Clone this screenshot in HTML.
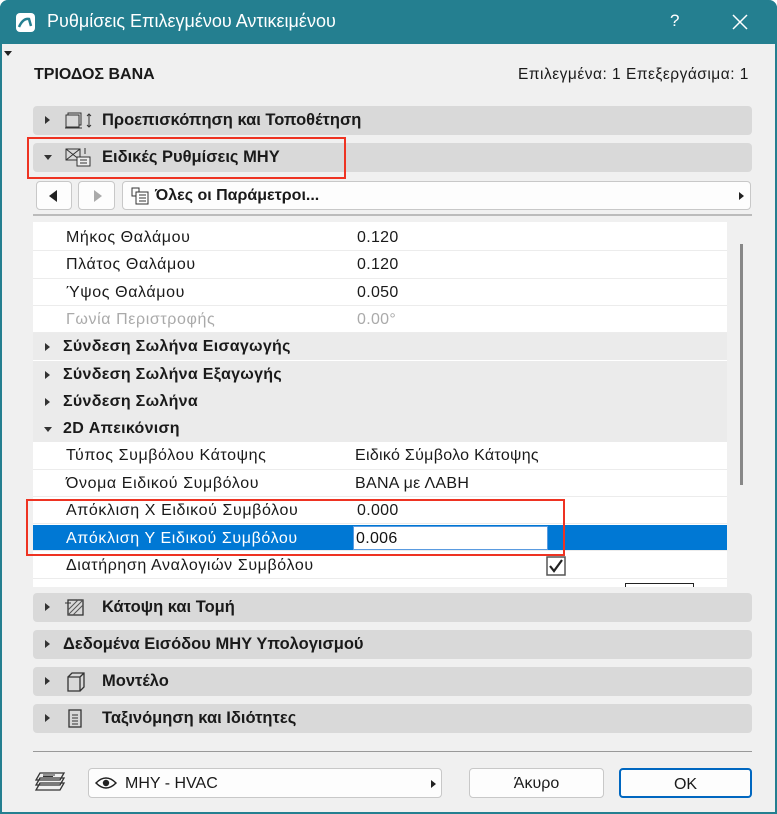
<!DOCTYPE html>
<html><head><meta charset="utf-8"><style>
*{box-sizing:border-box;margin:0;padding:0}
body{width:777px;height:814px;overflow:hidden;background:#fff;font-family:"Liberation Sans","DejaVu Sans",sans-serif;position:relative;font-size:14px;color:#1a1a1a}
.win{position:absolute;left:0;top:0;width:777px;height:814px;background:#f0f0f0;border:2px solid #247f90;border-top:none;border-radius:8px 8px 0 0}
.title{position:absolute;left:0;top:0;width:777px;height:44px;background:#247f90;border-radius:8px 8px 0 0;color:#fff}
.abs{position:absolute}
.hdr{position:absolute;left:33px;width:719px;height:29px;background:#d9d9d9;border-radius:4px;font-weight:bold;font-size:16.5px}
.hdr .t{position:absolute;top:5px}
.tri{position:absolute;width:0;height:0}
.tr{border-top:4px solid transparent;border-bottom:4px solid transparent;border-left:5px solid #333}
.td{border-left:4px solid transparent;border-right:4px solid transparent;border-top:5px solid #333}
.row{position:absolute;left:33px;width:694px;height:27.3px;border-bottom:1px solid #ececec;font-size:16px;letter-spacing:0.6px}
.row .a{position:absolute;left:33px;top:5px}
.row .b{position:absolute;left:324px;top:5px;letter-spacing:0.3px}
.grp{background:#ebebeb;font-weight:bold;border-bottom:none;font-size:16px;letter-spacing:0.3px}
.grp .a{left:30px}
.grp .tri{left:12px;top:10px}
.red{position:absolute;border:2px solid #ee3322}
.btn{position:absolute;background:#fdfdfd;border:1px solid #c8c8c8;border-radius:4px}
</style></head><body>
<div class="win"></div>
<div class="title">
 <div class="abs" style="left:16px;top:13px;width:19px;height:19px;background:#fff;border-radius:4px"><svg width="19" height="19"><path d="M3 14 Q7 5 13 6 L15 13" stroke="#247f90" stroke-width="2.5" fill="none"/></svg></div>
 <div class="abs" style="left:47px;top:11px;font-size:18px">Ρυθμίσεις Επιλεγμένου Αντικειμένου</div>
 <div class="abs" style="left:670px;top:11px;font-size:17px">?</div>
 <svg class="abs" style="left:732px;top:14px" width="16" height="16"><path d="M1 1L15 15M15 1L1 15" stroke="#fff" stroke-width="1.5"/></svg>
</div>
<div class="tri td" style="left:4px;top:51px;border-top-color:#222"></div>
<div class="abs" style="left:34px;top:66px;font-weight:bold;font-size:16px">ΤΡΙΟΔΟΣ ΒΑΝΑ</div>
<div class="abs" style="left:518px;top:66px;font-size:15.5px;letter-spacing:0.5px">Επιλεγμένα: 1 Επεξεργάσιμα: 1</div>

<div class="hdr" style="top:106px"><div class="tri tr" style="left:12px;top:10px"></div>
<svg class="abs" style="left:32px;top:5px" width="30" height="20"><rect x="3" y="2" width="13" height="12" fill="none" stroke="#333"/><rect x="1" y="4" width="13" height="12" fill="#d9d9d9" stroke="#333"/><path d="M0 17h17" stroke="#333"/><path d="M24 3v13M22 5l2-2 2 2M22 14l2 2 2-2" stroke="#333" fill="none"/></svg>
<div class="t" style="left:69px">Προεπισκόπηση και Τοποθέτηση</div></div>
<div class="hdr" style="top:143px"><div class="tri td" style="left:11px;top:12px"></div>
<svg class="abs" style="left:32px;top:4px" width="30" height="22"><rect x="1" y="2" width="14" height="11" fill="none" stroke="#333"/><path d="M1 2l14 11M15 2L1 13" stroke="#333"/><rect x="12" y="10" width="13" height="9" fill="#eee" stroke="#333"/><path d="M15 13h7M15 16h7M20 1v6" stroke="#333"/></svg>
<div class="t" style="left:69px">Ειδικές Ρυθμίσεις ΜΗΥ</div></div>
<div class="red" style="left:27px;top:137px;width:319px;height:42px"></div>

<div class="btn" style="left:36px;top:181px;width:36px;height:29px"><div class="tri" style="left:12px;top:8px;border-top:6px solid transparent;border-bottom:6px solid transparent;border-right:8px solid #222"></div></div>
<div class="btn" style="left:78px;top:181px;width:37px;height:29px"><div class="tri" style="left:15px;top:8px;border-top:6px solid transparent;border-bottom:6px solid transparent;border-left:8px solid #aaa"></div></div>
<div class="btn" style="left:122px;top:181px;width:629px;height:29px">
<svg class="abs" style="left:8px;top:5px" width="20" height="18"><rect x="1" y="1" width="7" height="8" fill="none" stroke="#333"/><rect x="5" y="5" width="12" height="12" fill="#fff" stroke="#333"/><path d="M8 8h7M8 11h7M8 14h7" stroke="#333"/></svg>
<div class="abs" style="left:32px;top:5px;font-weight:bold;font-size:16px">Όλες οι Παράμετροι...</div>
<div class="tri tr" style="left:616px;top:10px;border-left-color:#222"></div></div>
<div class="abs" style="left:33px;top:214px;width:719px;height:2px;background:#bbb"></div>

<div class="abs" style="left:33px;top:222px;width:694px;height:365px;background:#fff"></div>
<div class="abs" style="left:740px;top:244px;width:3px;height:241px;background:#888"></div>
<div class="row" style="top:224px"><span class="a">Μήκος Θαλάμου</span><span class="b">0.120</span></div>
<div class="row" style="top:251.3px"><span class="a">Πλάτος Θαλάμου</span><span class="b">0.120</span></div>
<div class="row" style="top:278.6px"><span class="a">Ύψος Θαλάμου</span><span class="b">0.050</span></div>
<div class="row" style="top:305.9px;color:#aaa"><span class="a">Γωνία Περιστροφής</span><span class="b">0.00°</span></div>
<div class="row grp" style="top:333.2px"><div class="tri tr"></div><span class="a">Σύνδεση Σωλήνα Εισαγωγής</span></div>
<div class="row grp" style="top:360.5px"><div class="tri tr"></div><span class="a">Σύνδεση Σωλήνα Εξαγωγής</span></div>
<div class="row grp" style="top:387.8px"><div class="tri tr"></div><span class="a">Σύνδεση Σωλήνα</span></div>
<div class="row grp" style="top:415.1px"><div class="tri td" style="top:12px;left:11px"></div><span class="a">2D Απεικόνιση</span></div>
<div class="row" style="top:442.4px"><span class="a">Τύπος Συμβόλου Κάτοψης</span><span class="b" style="left:322px">Ειδικό Σύμβολο Κάτοψης</span></div>
<div class="row" style="top:469.7px"><span class="a">Όνομα Ειδικού Συμβόλου</span><span class="b" style="left:322px">ΒΑΝΑ με ΛΑΒΗ</span></div>
<div class="row" style="top:497px"><span class="a">Απόκλιση Χ Ειδικού Συμβόλου</span><span class="b">0.000</span></div>
<div class="row" style="top:525px;background:#0078d4;color:#fff;height:26px"><span class="a">Απόκλιση Υ Ειδικού Συμβόλου</span>
<div class="abs" style="left:320px;top:1px;width:195px;height:24px;background:#fff;border:1px solid #5a9be0;color:#111;padding:3px 0 0 2px;letter-spacing:0.3px">0.006</div></div>
<div class="row" style="top:551.6px"><span class="a">Διατήρηση Αναλογιών Συμβόλου</span>
<svg class="abs" style="left:513px;top:4px" width="20" height="20"><rect x="1" y="1" width="18" height="18" fill="#fff" stroke="#555" stroke-width="1.5"/><path d="M4 10l4 5 8-11" stroke="#222" stroke-width="2.2" fill="none"/></svg></div>
<div class="abs" style="left:625px;top:583px;width:69px;height:4px;border:1px solid #222;border-bottom:none"></div>
<div class="red" style="left:26px;top:499px;width:539px;height:57px"></div>

<div class="hdr" style="top:593px"><div class="tri tr" style="left:12px;top:10px"></div>
<svg class="abs" style="left:32px;top:5px" width="24" height="20"><rect x="3" y="2" width="15" height="15" fill="none" stroke="#333" stroke-width="1.3"/><path d="M3 17l15-15M8 17l10-10M3 12l10-10" stroke="#555"/><path d="M0 5h6" stroke="#333"/></svg>
<div class="t" style="left:69px">Κάτοψη και Τομή</div></div>
<div class="hdr" style="top:630px"><div class="tri tr" style="left:12px;top:10px"></div><div class="t" style="left:30px">Δεδομένα Εισόδου ΜΗΥ Υπολογισμού</div></div>
<div class="hdr" style="top:667px"><div class="tri tr" style="left:12px;top:10px"></div>
<svg class="abs" style="left:33px;top:4px" width="22" height="22"><path d="M2 6h12v14H2zM2 6l4-4h12v14l-4 4M14 6l4-4" fill="none" stroke="#333" stroke-width="1.3"/></svg>
<div class="t" style="left:69px">Μοντέλο</div></div>
<div class="hdr" style="top:704px"><div class="tri tr" style="left:12px;top:10px"></div>
<svg class="abs" style="left:35px;top:5px" width="16" height="20"><rect x="1" y="1" width="12" height="17" fill="none" stroke="#333" stroke-width="1.3"/><path d="M4 6h6M4 9h6M4 12h6M4 15h6" stroke="#333"/></svg>
<div class="t" style="left:69px">Ταξινόμηση και Ιδιότητες</div></div>

<div class="abs" style="left:33px;top:751px;width:719px;height:1px;background:#999"></div>
<svg class="abs" style="left:34px;top:770px" width="36" height="26"><path d="M6 3h24l-4 7H2zM6 8h24l-4 7H2zM6 13h24l-4 7H2z" fill="#f0f0f0" stroke="#333" stroke-width="1.3"/><path d="M9 5h12M9 6.5h10" stroke="#333"/></svg>
<div class="btn" style="left:88px;top:768px;width:354px;height:30px">
<svg class="abs" style="left:6px;top:7px" width="22" height="14"><path d="M1 7Q11-3 21 7Q11 17 1 7z" fill="none" stroke="#222" stroke-width="1.5"/><circle cx="11" cy="7" r="3.2" fill="#222"/></svg>
<div class="abs" style="left:36px;top:6px;font-size:16px">ΜΗΥ - HVAC</div>
<div class="tri tr" style="left:342px;top:11px;border-left-color:#222"></div></div>
<div class="btn" style="left:469px;top:768px;width:135px;height:30px;text-align:center;padding-top:6px;font-size:16px">Άκυρο</div>
<div class="btn" style="left:619px;top:768px;width:133px;height:30px;text-align:center;padding-top:6px;font-size:16px;border:2px solid #0067c0">OK</div>
</body></html>
